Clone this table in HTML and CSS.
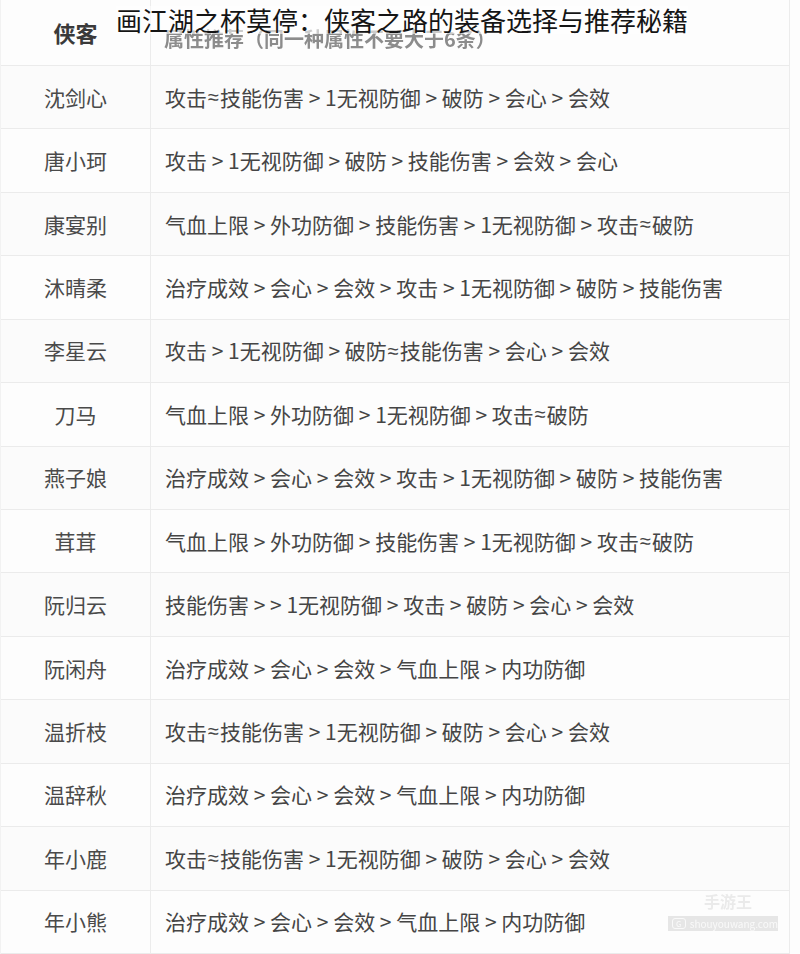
FILE: index.html
```html
<!DOCTYPE html>
<html lang="zh-CN">
<head>
<meta charset="utf-8">
<title>画江湖之杯莫停</title>
<link rel="stylesheet" href="styles.css">
</head>
<body>
<div class="page">
  <div class="table">
    <div class="row head">
      <div class="cell name">侠客</div>
      <div class="cell attr">属性推荐（同一种属性不要大于6条）</div>
    </div>
    <div class="row"><div class="cell name">沈剑心</div><div class="cell attr">攻击<span class="ap">≈</span>技能伤害 &gt; 1无视防御 &gt; 破防 &gt; 会心 &gt; 会效</div></div>
    <div class="row"><div class="cell name">唐小珂</div><div class="cell attr">攻击 &gt; 1无视防御 &gt; 破防 &gt; 技能伤害 &gt; 会效 &gt; 会心</div></div>
    <div class="row"><div class="cell name">康宴别</div><div class="cell attr">气血上限 &gt; 外功防御 &gt; 技能伤害 &gt; 1无视防御 &gt; 攻击<span class="ap">≈</span>破防</div></div>
    <div class="row"><div class="cell name">沐晴柔</div><div class="cell attr">治疗成效 &gt; 会心 &gt; 会效 &gt; 攻击 &gt; 1无视防御 &gt; 破防 &gt; 技能伤害</div></div>
    <div class="row"><div class="cell name">李星云</div><div class="cell attr">攻击 &gt; 1无视防御 &gt; 破防<span class="ap">≈</span>技能伤害 &gt; 会心 &gt; 会效</div></div>
    <div class="row"><div class="cell name">刀马</div><div class="cell attr">气血上限 &gt; 外功防御 &gt; 1无视防御 &gt; 攻击<span class="ap">≈</span>破防</div></div>
    <div class="row"><div class="cell name">燕子娘</div><div class="cell attr">治疗成效 &gt; 会心 &gt; 会效 &gt; 攻击 &gt; 1无视防御 &gt; 破防 &gt; 技能伤害</div></div>
    <div class="row"><div class="cell name">茸茸</div><div class="cell attr">气血上限 &gt; 外功防御 &gt; 技能伤害 &gt; 1无视防御 &gt; 攻击<span class="ap">≈</span>破防</div></div>
    <div class="row"><div class="cell name">阮归云</div><div class="cell attr">技能伤害 &gt; &gt; 1无视防御 &gt; 攻击 &gt; 破防 &gt; 会心 &gt; 会效</div></div>
    <div class="row"><div class="cell name">阮闲舟</div><div class="cell attr">治疗成效 &gt; 会心 &gt; 会效 &gt; 气血上限 &gt; 内功防御</div></div>
    <div class="row"><div class="cell name">温折枝</div><div class="cell attr">攻击<span class="ap">≈</span>技能伤害 &gt; 1无视防御 &gt; 破防 &gt; 会心 &gt; 会效</div></div>
    <div class="row"><div class="cell name">温辞秋</div><div class="cell attr">治疗成效 &gt; 会心 &gt; 会效 &gt; 气血上限 &gt; 内功防御</div></div>
    <div class="row"><div class="cell name">年小鹿</div><div class="cell attr">攻击<span class="ap">≈</span>技能伤害 &gt; 1无视防御 &gt; 破防 &gt; 会心 &gt; 会效</div></div>
    <div class="row"><div class="cell name">年小熊</div><div class="cell attr">治疗成效 &gt; 会心 &gt; 会效 &gt; 气血上限 &gt; 内功防御</div></div>
  </div>
  <h1 class="title">画江湖之杯莫停：侠客之路的装备选择与推荐秘籍</h1>
  <div class="watermark">
    <div class="wm-top">手游王</div>
    <div class="wm-bar"><span class="wm-logo">G</span>shouyouwang.com</div>
  </div>
</div>
</body>
</html>
```

FILE: styles.css
```css
* { box-sizing: border-box; }
html, body { margin: 0; padding: 0; background: #fff; }
body {
  font-family: "Noto Sans CJK SC", "Noto Sans", "DejaVu Sans", sans-serif;
  color: #444;
}
.page {
  position: relative;
  width: 800px;
  height: 954px;
  overflow: hidden;
  background: #fdfdfd;
}
.table {
  width: 790px;
  height: 954px;
  display: grid;
  grid-template-rows: 66px repeat(14, 1fr);
  border-right: 1px solid #ececec;
  border-left: 1px solid #f2f2f2;
}
.row {
  display: grid;
  grid-template-columns: 150px 1fr;
  border-bottom: 1px solid #ebebeb;
}
.row:nth-child(even) { background: #fbfbfb; }
.cell {
  display: flex;
  align-items: center;
  font-size: 21px;
  line-height: 1;
  white-space: nowrap;
}
.name {
  justify-content: center;
  border-right: 1px solid #ececec;
  color: #4a4a4a;
}
.attr {
  padding-left: 14px;
  color: #454545;
}
.ap {
  font-family: "Liberation Sans", sans-serif;
  font-size: 20px;
  padding: 0 1px;
}
.head .name {
  font-weight: bold;
  font-size: 22px;
  color: #3a3a3a;
  padding-bottom: 1px;
}
.head .attr {
  font-weight: bold;
  font-size: 20px;
  color: #8c8c8c;
  padding-left: 13px;
  padding-top: 12px;
  filter: blur(0.4px);
}
.title {
  position: absolute;
  left: 116px;
  top: 6px;
  margin: 0;
  font-size: 26px;
  line-height: 28px;
  font-weight: normal;
  color: #151515;
  white-space: nowrap;
  background: rgba(255,255,255,0.55);
}
.watermark {
  position: absolute;
  left: 668px;
  top: 892px;
  width: 110px;
  opacity: 0.35;
  color: #9a9a9a;
  text-align: center;
}
.wm-top {
  font-size: 16px;
  line-height: 18px;
  font-weight: bold;
  color: #c8c8c8;
  padding-left: 10px;
}
.wm-bar {
  margin-top: 6px;
  height: 15px;
  background: #bdbdbd;
  color: #f4f4f4;
  font-size: 10px;
  line-height: 15px;
  display: flex;
  align-items: center;
  gap: 4px;
  padding-left: 4px;
}
.wm-logo {
  display: inline-block;
  width: 18px;
  height: 11px;
  border: 1px solid #f4f4f4;
  border-radius: 3px;
  font-size: 8px;
  line-height: 9px;
}
```
